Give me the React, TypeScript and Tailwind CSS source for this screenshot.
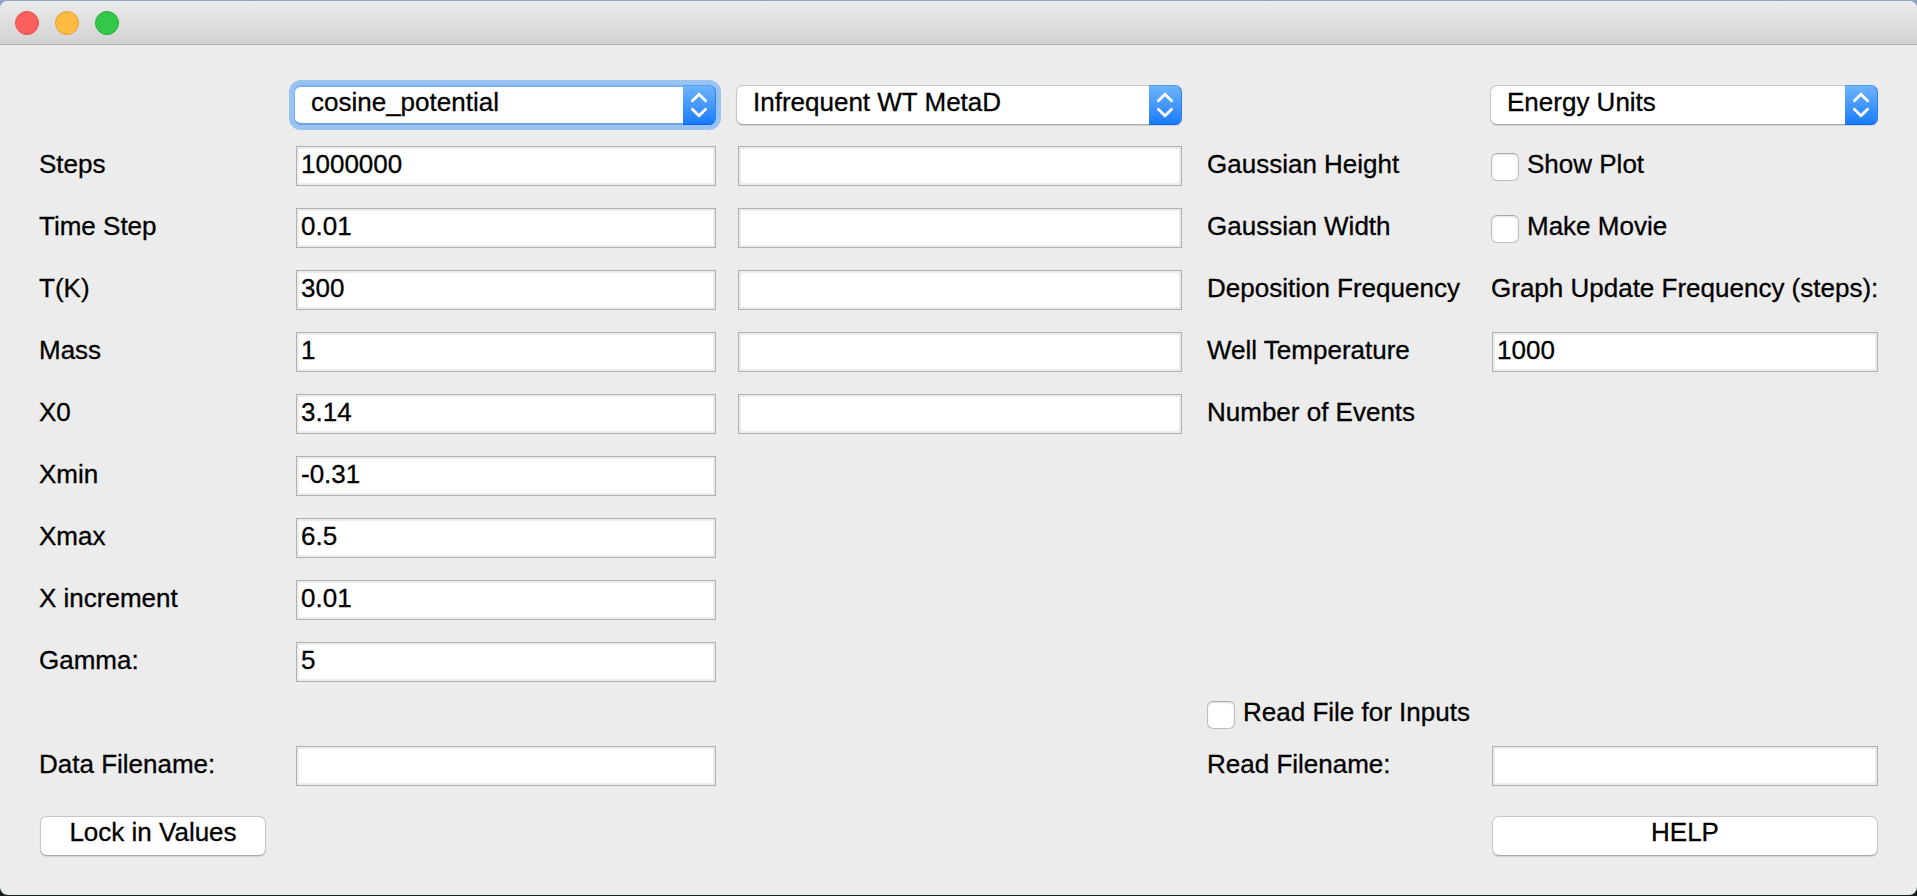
import type { ReactNode } from 'react';

function Arrows() {
  return (
    <span className="flex h-full w-[33px] shrink-0 items-center justify-center rounded-r-[7px] border-y border-r border-t-[#559fec] border-r-[#2c82f0] border-b-[#0e62f0] bg-linear-to-b from-[#6cb3fa] to-[#147bff]">
      <svg width="18" height="26" viewBox="0 0 18 26" fill="none" stroke="#fff" strokeWidth="2.8" strokeLinecap="round" strokeLinejoin="miter">
        <path d="M2.4 8.7 L9 2.3 L15.6 8.7" />
        <path d="M2.4 17.3 L9 23.7 L15.6 17.3" />
      </svg>
    </span>
  );
}

function Select({ children, className = '', focused = false }: { children: ReactNode; className?: string; focused?: boolean }) {
  const frame = focused
    ? 'pl-4 border-2 border-x border-t-[#79b0f0] border-x-[#79b0f0] border-b-[#6f9fdc] leading-[31px] ring-[5px] ring-[#98c3f3]'
    : 'pl-4 border border-[#c6c6c6] border-b-[#a9a9a9] leading-[33px] shadow-[0_1px_1px_rgba(0,0,0,0.12)]';
  return (
    <div className={`relative flex h-10 rounded-[7px] ${className}`}>
      <div className={`flex min-w-0 flex-1 whitespace-nowrap rounded-[7px] bg-white ${frame}`}>{children}</div>
      <span className="absolute top-0 right-0 h-10">
        <Arrows />
      </span>
    </div>
  );
}

function Field({ value = '' }: { value?: string }) {
  return (
    <input
      readOnly
      value={value}
      className="block h-10 w-full border border-[#b0b0b0] bg-white pb-[4px] pl-[4px] leading-[30px] shadow-[inset_0_0_0_2px_#ececec] outline-none"
    />
  );
}

function Label({ children, className = '' }: { children?: ReactNode; className?: string }) {
  return <span className={`block whitespace-nowrap leading-9 ${className}`}>{children}</span>;
}

function Check({ children, className = '' }: { children: ReactNode; className?: string }) {
  return (
    <div className={`flex h-9 items-start ${className}`}>
      <span className="mt-[7px] size-7 shrink-0 rounded-[6px] border border-[#bdbdbd] border-t-[#a8a8a8] bg-white shadow-[inset_0_1px_2px_rgba(0,0,0,0.12)]" />
      <span className="ml-2 whitespace-nowrap leading-9">{children}</span>
    </div>
  );
}

function Button({ children, className = '' }: { children: ReactNode; className?: string }) {
  return (
    <button
      className={`block h-10 rounded-[7px] border border-[#c6c6c6] border-b-[#a9a9a9] bg-white pb-2 text-center leading-[30px] shadow-[0_1px_1px_rgba(0,0,0,0.12)] ${className}`}
    >
      {children}
    </button>
  );
}

const parameters = [
  { label: 'Steps', value: '1000000' },
  { label: 'Time Step', value: '0.01' },
  { label: 'T(K)', value: '300' },
  { label: 'Mass', value: '1' },
  { label: 'X0', value: '3.14' },
  { label: 'Xmin', value: '-0.31' },
  { label: 'Xmax', value: '6.5' },
  { label: 'X increment', value: '0.01' },
  { label: 'Gamma:', value: '5' },
];

const metadynamics = ['Gaussian Height', 'Gaussian Width', 'Deposition Frequency', 'Well Temperature', 'Number of Events'];

const options: ReactNode[] = [
  <Check className="-ml-px">Show Plot</Check>,
  <Check className="-ml-px">Make Movie</Check>,
  <Label className="-ml-px">Graph Update Frequency (steps):</Label>,
  <Field value="1000" />,
];

function Row({ className, cells }: { className: string; cells: ReactNode[] }) {
  return (
    <div className={`grid grid-cols-[257px_420px_22px_444px_25px_285px_386px] items-start ${className}`}>
      <div>{cells[0]}</div>
      <div>{cells[1]}</div>
      <div />
      <div>{cells[2]}</div>
      <div />
      <div>{cells[3]}</div>
      <div>{cells[4]}</div>
    </div>
  );
}

export default function App() {
  return (
    <div className="h-[896px] w-[1917px] overflow-hidden bg-linear-to-b from-[#8fa3bf] from-50% to-[#14201f] to-50% pt-px pb-px font-['Liberation_Sans',Arial,sans-serif] text-[26px] text-black [-webkit-text-stroke:0.3px_#000]">
      <div className="flex h-full flex-col overflow-hidden rounded-[8px] bg-[#ececec]">
        <header className="flex h-11 shrink-0 items-start gap-4 border-b border-[#b0b0b0] bg-linear-to-b from-[#ebebeb] to-[#d2d2d2] pt-[10px] pl-[15px]">
          <span className="size-6 rounded-full border border-[#e2504b] bg-[#fc605c]" />
          <span className="size-6 rounded-full border border-[#e0a03a] bg-[#fdbc40]" />
          <span className="size-6 rounded-full border border-[#24ab37] bg-[#34c84a]" />
        </header>
        <main className="flex flex-col pt-10 pl-[39px]">
          <Row
            className="h-[61px]"
            cells={[
              null,
              <Select focused className="-ml-[2px]">cosine_potential</Select>,
              <Select className="-ml-[2px]">Infrequent WT MetaD</Select>,
              null,
              <Select className="-ml-[2px]">Energy Units</Select>,
            ]}
          />
          {parameters.map((p, i) => (
            <Row
              key={p.label}
              className={i === parameters.length - 1 ? 'h-[52px]' : 'h-[62px]'}
              cells={[
                <Label>{p.label}</Label>,
                <Field value={p.value} />,
                metadynamics[i] ? <Field /> : null,
                <Label>{metadynamics[i]}</Label>,
                options[i],
              ]}
            />
          ))}
          <Row className="h-[52px]" cells={[null, null, null, <Check>Read File for Inputs</Check>, null]} />
          <Row
            className="h-[70px]"
            cells={[<Label>Data Filename:</Label>, <Field />, null, <Label>Read Filename:</Label>, <Field />]}
          />
          <Row
            className="h-10"
            cells={[<Button className="ml-px w-[226px]">Lock in Values</Button>, null, null, null, <Button className="w-full">HELP</Button>]}
          />
        </main>
      </div>
    </div>
  );
}
